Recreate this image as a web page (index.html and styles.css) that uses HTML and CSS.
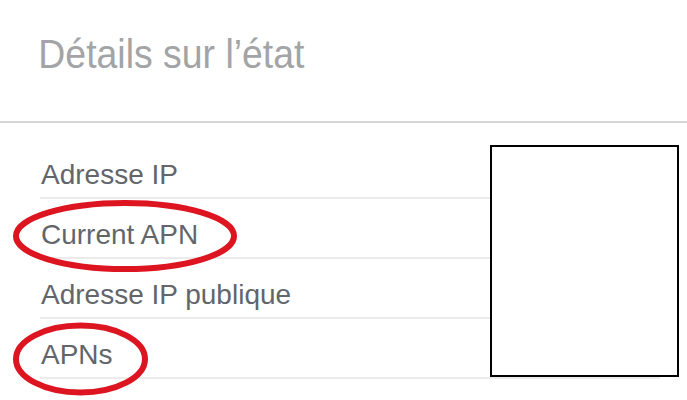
FILE: index.html
```html
<!DOCTYPE html>
<html lang="fr">
<head>
<meta charset="utf-8">
<title>Détails sur l’état</title>
<link rel="stylesheet" href="styles.css">
</head>
<body>
<div class="page">
  <header class="header">
    <h1 class="title">Détails sur l’état</h1>
  </header>
  <ul class="list">
    <li class="row">Adresse IP</li>
    <li class="row">Current APN</li>
    <li class="row">Adresse IP publique</li>
    <li class="row">APNs</li>
  </ul>
  <div class="redact"></div>
  <svg class="marks" width="687" height="400" viewBox="0 0 687 400" aria-hidden="true">
    <ellipse cx="125" cy="236" rx="109" ry="33" fill="none" stroke="#dc1520" stroke-width="6"/>
    <ellipse cx="80.5" cy="359" rx="64.5" ry="33.5" fill="none" stroke="#dc1520" stroke-width="6"/>
  </svg>
</div>
</body>
</html>
```
FILE: styles.css
```css
html, body {
  margin: 0;
  padding: 0;
  background: #ffffff;
}
.page {
  position: relative;
  width: 687px;
  height: 400px;
  overflow: hidden;
  font-family: "Liberation Sans", Arial, sans-serif;
}
.header {
  height: 121px;
  border-bottom: 2px solid #d6d6d6;
  box-sizing: content-box;
}
.title {
  margin: 0;
  padding: 34px 0 0 41px;
  font-size: 40px;
  line-height: 40px;
  font-weight: 400;
  color: #a2a4a6;
  transform: scaleX(0.935);
  transform-origin: 0 0;
  white-space: nowrap;
}
.list {
  list-style: none;
  margin: 0 27px 0 40px;
  padding: 16px 0 0 0;
}
.row {
  box-sizing: border-box;
  height: 60px;
  padding: 22px 0 0 1px;
  font-size: 28px;
  line-height: 28px;
  color: #62666a;
  border-bottom: 2px solid #ebebeb;
}
.redact {
  position: absolute;
  left: 490px;
  top: 145px;
  width: 189px;
  height: 232px;
  box-sizing: border-box;
  border: 2px solid #000;
  background: #fff;
}
.marks {
  position: absolute;
  left: 0;
  top: 0;
}
```
